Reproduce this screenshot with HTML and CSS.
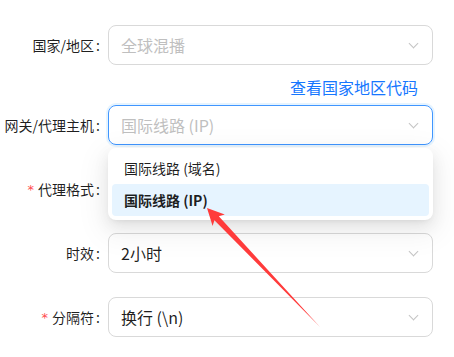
FILE: index.html
```
<!DOCTYPE html>
<html lang="zh-CN">
<head>
  <meta charset="UTF-8">
  <title>代理设置</title>
  <link rel="stylesheet" href="styles.css">
</head>
<body>
  <form class="form">
    <div class="row">
      <label class="label">国家/地区<span class="colon">:</span></label>
      <div class="select">
        <span class="placeholder">全球混播</span>
        <span class="chevron"></span>
      </div>
    </div>
    <div class="extra"><a href="#">查看国家地区代码</a></div>

    <div class="row">
      <label class="label">网关/代理主机<span class="colon">:</span></label>
      <div class="select focused">
        <span class="placeholder">国际线路 (IP)</span>
        <span class="chevron"></span>
        <div class="dropdown">
          <div class="option">国际线路 (域名)</div>
          <div class="option selected">国际线路 (IP)</div>
        </div>
      </div>
    </div>

    <div class="row gap">
      <label class="label"><span class="req">*</span>代理格式<span class="colon">:</span></label>
      <div class="select">
        <span class="value"></span>
        <span class="chevron"></span>
      </div>
    </div>

    <div class="row gap">
      <label class="label">时效<span class="colon">:</span></label>
      <div class="select">
        <span class="value">2小时</span>
        <span class="chevron"></span>
      </div>
    </div>

    <div class="row gap">
      <label class="label"><span class="req">*</span>分隔符<span class="colon">:</span></label>
      <div class="select">
        <span class="value">换行 (\n)</span>
        <span class="chevron"></span>
      </div>
    </div>
  </form>

  <svg class="pointer" width="454" height="357" viewBox="0 0 454 357">
    <polygon points="207,208 212.6,226 214.4,220.3 320,327 218.8,216.2 224.8,214.6" fill="#ff3b3b"/>
  </svg>
</body>
</html>
```

FILE: styles.css
```
body {
  margin: 0;
  font-family: "Noto Sans CJK SC", "Noto Sans", sans-serif;
  color: rgba(0, 0, 0, 0.88);
  background-color: #ffffff;
}
.form {
  padding: 25px 21px 0 0;
}
.row {
  display: flex;
  align-items: center;
  height: 40px;
}
.row.gap {
  margin-top: 24px;
}
.label {
  width: 108px;
  flex: none;
  box-sizing: border-box;
  padding-right: 8px;
  display: flex;
  justify-content: flex-end;
  align-items: center;
  font-size: 14px;
  white-space: nowrap;
}
.colon {
  margin-left: 2px;
}
.req {
  color: #ff4d4f;
  margin-right: 4px;
  font-family: "DejaVu Sans", sans-serif;
  font-size: 13px;
}
.select {
  position: relative;
  flex: 1;
  height: 40px;
  box-sizing: border-box;
  border: 1px solid #d9d9d9;
  border-radius: 8px;
  padding: 0 12px;
  display: flex;
  align-items: center;
  font-size: 16px;
}
.select.focused {
  border-color: #4096ff;
  box-shadow: 0 0 0 2px rgba(5, 145, 255, 0.1);
}
.placeholder {
  color: #bfbfbf;
  flex: 1;
}
.value {
  flex: 1;
}
.chevron {
  width: 6px;
  height: 6px;
  border-right: 1px solid #c4c4c4;
  border-bottom: 1px solid #c4c4c4;
  transform: rotate(45deg);
  margin: -4px 3px 0 0;
}
.extra {
  margin: 12px 0 8px 108px;
  padding-right: 15px;
  text-align: right;
  font-size: 16px;
  line-height: 20px;
}
.extra a {
  color: #1677ff;
  text-decoration: none;
}
.dropdown {
  position: absolute;
  top: calc(100% + 4px);
  left: -1px;
  right: -1px;
  z-index: 2;
  padding: 4px;
  background-color: #ffffff;
  border-radius: 8px;
  box-shadow: 0 6px 16px 0 rgba(0, 0, 0, 0.08), 0 3px 6px -4px rgba(0, 0, 0, 0.12), 0 9px 28px 8px rgba(0, 0, 0, 0.05);
}
.option {
  height: 32px;
  padding: 0 12px;
  display: flex;
  align-items: center;
  font-size: 14px;
  border-radius: 4px;
}
.option.selected {
  background-color: #e6f4ff;
  font-weight: 600;
}
.pointer {
  position: absolute;
  top: 0;
  left: 0;
  z-index: 3;
  pointer-events: none;
}
```
